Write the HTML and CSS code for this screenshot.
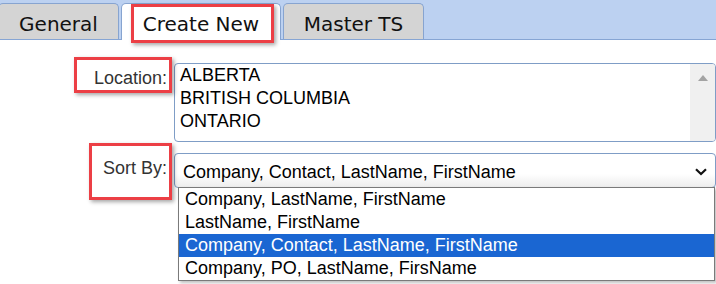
FILE: index.html
```html
<!DOCTYPE html>
<html>
<head>
<meta charset="utf-8">
<link rel="stylesheet" href="styles.css">
</head>
<body>
<div class="tabbar">
  <div class="tab tab-general">General</div>
  <div class="tab tab-create active">Create New</div>
  <div class="tab tab-master">Master TS</div>
</div>
<div class="form">
  <div class="lbl">Location:</div>
  <div class="listbox">
    <div class="items">
      <div class="item">ALBERTA</div>
      <div class="item">BRITISH COLUMBIA</div>
      <div class="item">ONTARIO</div>
    </div>
    <div class="scrollbar"><span class="up-arrow"></span></div>
  </div>
  <div class="lbl">Sort By:</div>
  <div class="select-wrap">
    <div class="select">
      <span class="select-text">Company, Contact, LastName, FirstName</span>
      <svg class="chevron" width="12" height="8" viewBox="0 0 12 8"><path d="M1 1.2 L6 6 L11 1.2" fill="none" stroke="#111" stroke-width="2.2"/></svg>
    </div>
    <div class="dropdown">
      <div class="opt">Company, LastName, FirstName</div>
      <div class="opt">LastName, FirstName</div>
      <div class="opt selected">Company, Contact, LastName, FirstName</div>
      <div class="opt">Company, PO, LastName, FirsName</div>
    </div>
  </div>
</div>
<div class="mark mark-tab"></div>
<div class="mark mark-loc"></div>
<div class="mark mark-sort"></div>
</body>
</html>
```

FILE: styles.css
```css
html, body {
  margin: 0;
  padding: 0;
  background: #ffffff;
  width: 716px;
  height: 284px;
  overflow: hidden;
}
body {
  position: relative;
  font-family: "Liberation Sans", Arial, sans-serif;
}
.tabbar {
  box-sizing: border-box;
  height: 40px;
  background: #bcd1f1;
  border-bottom: 1px solid #86a5d4;
  display: flex;
  align-items: flex-end;
  padding-top: 3px;
}
.tab {
  box-sizing: border-box;
  height: 36px;
  border: 1px solid #87a4d0;
  border-bottom: none;
  border-radius: 5px 5px 0 0;
  background: #d4d4d4;
  font-family: "DejaVu Sans", Verdana, sans-serif;
  font-size: 20px;
  line-height: 20px;
  padding-top: 10px;
  text-align: center;
  color: #111;
  margin-left: 2px;
}
.tab-general { width: 121px; margin-left: -2px; }
.tab-create { width: 160px; }
.tab-master { width: 141px; }
.tab.active {
  background: #ffffff;
  height: 37px;
  margin-bottom: -1px;
}
.form {
  display: grid;
  grid-template-columns: 167px 542px;
  column-gap: 7px;
  row-gap: 11px;
  padding-top: 23px;
  font-size: 18px;
}
.lbl {
  text-align: right;
  color: #333;
  line-height: 23px;
  padding-top: 4px;
}
.listbox {
  box-sizing: border-box;
  height: 79px;
  border: 1px solid #7f9dc6;
  border-radius: 4px;
  display: flex;
  overflow: hidden;
}
.items {
  flex: 1;
  padding-left: 5px;
  line-height: 23px;
  color: #000;
}
.scrollbar {
  width: 25px;
  background: #f0f0f0;
  display: flex;
  justify-content: center;
  padding-top: 11px;
  box-sizing: border-box;
}
.up-arrow {
  width: 0;
  height: 0;
  border-left: 5px solid transparent;
  border-right: 5px solid transparent;
  border-bottom: 6px solid #a3a3a3;
}
.select-wrap {
  position: relative;
}
.select {
  box-sizing: border-box;
  height: 35px;
  border: 1px solid #7f9dc6;
  border-radius: 4px;
  background: linear-gradient(#ffffff 60%, #ededed);
  display: flex;
  align-items: center;
  justify-content: space-between;
  padding: 3px 8px 0 8px;
  line-height: 23px;
  color: #000;
}
.chevron {
  display: block;
}
.dropdown {
  position: absolute;
  top: 34px;
  left: 4px;
  right: 1px;
  background: #fff;
  border: 1px solid #7a7a7a;
  box-shadow: 2px 2px 3px rgba(0, 0, 0, 0.25);
  line-height: 23px;
  color: #000;
}
.opt {
  padding-left: 6px;
  white-space: nowrap;
}
.opt.selected {
  background: #1a66d2;
  color: #fff;
}
.mark {
  position: absolute;
  box-sizing: border-box;
  border: 3px solid #ec3f45;
  box-shadow: 2px 2px 4px rgba(0, 0, 0, 0.35);
}
.mark-tab { left: 131px; top: 4px; width: 143px; height: 39px; }
.mark-loc { left: 74px; top: 57px; width: 98px; height: 36px; }
.mark-sort { left: 89px; top: 143px; width: 83px; height: 57px; }
```
